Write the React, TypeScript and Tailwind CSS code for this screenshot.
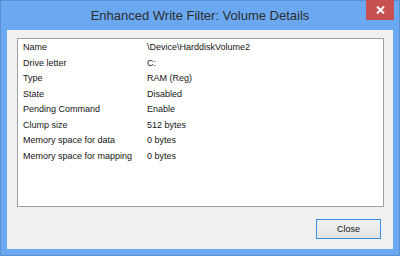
import React from 'react';

const rows = [
    { label: "Name", value: "\\Device\\HarddiskVolume2" },
    { label: "Drive letter", value: "C:" },
    { label: "Type", value: "RAM (Reg)" },
    { label: "State", value: "Disabled" },
    { label: "Pending Command", value: "Enable" },
    { label: "Clump size", value: "512 bytes" },
    { label: "Memory space for data", value: "0 bytes" },
    { label: "Memory space for mapping", value: "0 bytes" },
];

const App: React.FC = () => {
    return (
        <div className="w-[400px] h-[256px] flex flex-col bg-[#6aa9f2] border border-[#5b8fd0] font-['Liberation_Sans',Arial,sans-serif]">
            <div className="relative h-[29px] shrink-0">
                <div className="text-center text-[13px] leading-[29px] text-[#2d2d2d]">
                    Enhanced Write Filter: Volume Details
                </div>
                <div className="absolute top-[-1px] right-[5px] w-[28px] h-[20px] bg-[#c75050] flex items-center justify-center">
                    <svg width="9" height="8" viewBox="0 0 9 8">
                        <path d="M1 0.5 L8 7.5 M8 0.5 L1 7.5" stroke="#ffffff" strokeWidth="2" />
                    </svg>
                </div>
            </div>

            <div className="flex-1 mx-[6px] mb-[6px] bg-[#f0f0f0] border-t border-[#f6f6f6] flex flex-col pt-[7px] pl-[10px] pr-[9px]">
                <div className="h-[169px] bg-white border border-[#a0a0a0] pt-[1px] pl-[5px] text-[9px] text-[#151515]">
                    {rows.map(row => (
                        <div key={row.label} className="flex h-[15.5px] leading-[15.5px]">
                            <span className="w-[124px] shrink-0">{row.label}</span>
                            <span>{row.value}</span>
                        </div>
                    ))}
                </div>
                <div className="flex justify-end mt-[12px] pr-[3px]">
                    <button className="w-[65px] h-[20px] border border-[#3b8fe0] bg-gradient-to-b from-[#f2f2f2] to-[#e3e3e3] text-[9px] text-[#151515] leading-none">
                        Close
                    </button>
                </div>
            </div>
        </div>
    );
};

export default App;
